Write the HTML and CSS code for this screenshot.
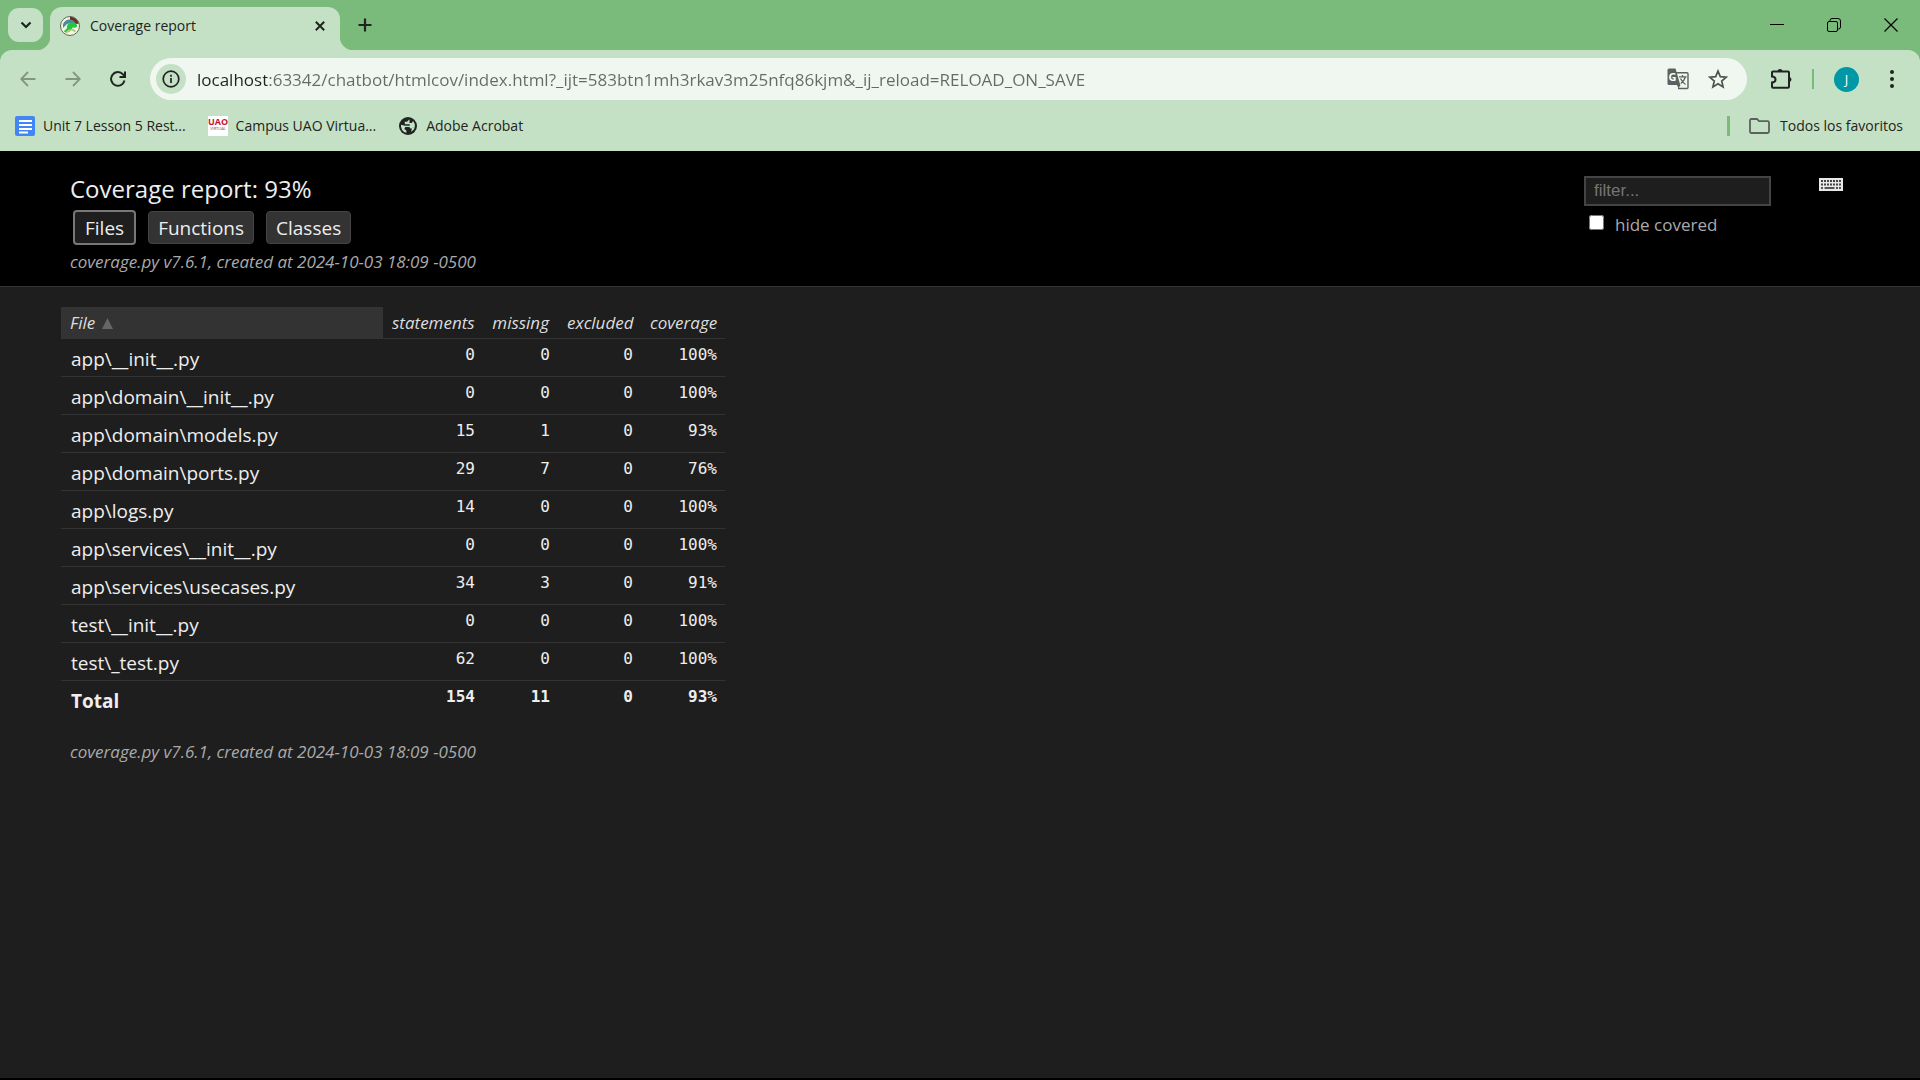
FILE: index.html
```html
<!DOCTYPE html>
<html lang="es">
<head>
<meta charset="utf-8">
<meta name="viewport" content="width=device-width, initial-scale=1">
<title>Coverage report</title>
<link rel="stylesheet" href="styles.css">
</head>
<body>
<div class="browser">
  <div class="tabstrip">
    <button class="tab-search" aria-label="Buscar pestañas"><svg width="12" height="8" viewBox="0 0 12 8"><path d="M1.5 1.5 6 6l4.500-4.500" fill="none" stroke="#1f2420" stroke-width="2.200"/></svg></button>
    <div class="tab">
      <svg class="favicon" width="20" height="20" viewBox="0 0 20 20"><circle cx="10" cy="10" r="9.500" fill="#f3f7df" stroke="#5d6b5c"/><path d="M10 .8a9.200 9.200 0 0 1 8.800 7L15 8l-5-4z" fill="#6d2b20"/><path d="M3 8c2-4 6-6 11-3l2 3-5-1-4 1-4 4z" fill="#4d8a99"/><path d="M7 11c0-5 8-6 10-2 .8 2-1 3-4 2.500-1 0-1 2-2 3s-5 3-7 1c1-2 3-2 3-4.500z" fill="#22c63f"/><path d="M6 17c3-4 8-4 9-1" stroke="#b5c98c" stroke-width="2" fill="none"/></svg>
      <span class="tab-title">Coverage report</span>
      <button class="icon-button tab-close" aria-label="Cerrar pestaña"><svg width="10" height="10" viewBox="0 0 10 10"><path d="m.8.8 8.400 8.400M9.200.8.8 9.200" stroke="#1f2420" stroke-width="2"/></svg></button>
    </div>
    <button class="icon-button new-tab" aria-label="Nueva pestaña"><svg width="14" height="14" viewBox="0 0 14 14"><path d="M7 .5v13M.5 7h13" stroke="#1f2420" stroke-width="2.200"/></svg></button>
    <div class="window-controls">
      <button class="icon-button" aria-label="Minimizar"><svg width="14" height="14" viewBox="0 0 14 14"><path d="M0 6.500h14" stroke="#000"/></svg></button>
      <button class="icon-button" aria-label="Restaurar"><svg width="14" height="14" viewBox="0 0 14 14"><rect x=".5" y="3.500" width="10" height="10" rx="1.500" fill="none" stroke="#000"/><path d="M3 3V2.500Q3 .5 5 .5h6q2.500 0 2.500 2.500v6q0 2-2 2H11" fill="none" stroke="#000"/></svg></button>
      <button class="icon-button" aria-label="Cerrar"><svg width="14" height="14" viewBox="0 0 14 14"><path d="m.5.5 13 13m0-13-13 13" stroke="#000" stroke-width="1.200"/></svg></button>
    </div>
  </div>
  <div class="chrome">
    <div class="toolbar">
      <button class="icon-button nav" aria-label="Atrás"><svg width="16" height="16" viewBox="0 0 16 16"><path d="M15.500 8H1.500M8 1 1.200 8 8 15" fill="none" stroke="#83977f" stroke-width="1.800"/></svg></button>
      <button class="icon-button nav" aria-label="Adelante"><svg width="16" height="16" viewBox="0 0 16 16"><path d="M.5 8h14M8 1l6.800 7L8 15" fill="none" stroke="#83977f" stroke-width="1.800"/></svg></button>
      <button class="icon-button nav" aria-label="Recargar"><svg width="16" height="16" viewBox="0 0 16 16"><path d="M14.500 9.500A6.800 6.800 0 1 1 13 3.400l1.500 1.800" fill="none" stroke="#1f2420" stroke-width="2"/><path d="M15 .5V6H9.500" fill="none" stroke="#1f2420" stroke-width="2"/></svg></button>
      <div class="omnibox">
        <button class="icon-button site-info" aria-label="Información del sitio"><svg width="18" height="18" viewBox="0 0 18 18"><circle cx="9" cy="9" r="7.800" fill="none" stroke="#1f2420" stroke-width="1.700"/><path d="M9 8v5M9 4.800v1.900" stroke="#1f2420" stroke-width="1.700"/></svg></button>
        <input class="url" type="text" aria-label="Dirección" value="localhost:63342/chatbot/htmlcov/index.html?_ijt=583btn1mh3rkav3m25nfq86kjm&amp;_ij_reload=RELOAD_ON_SAVE">
        <button class="icon-button" aria-label="Traducir"><svg width="22" height="22" viewBox="0 0 22 22"><path d="M9 4.800h11q1 0 1 1v13.700q0 1-1 1h-9" fill="none" stroke="#5c605e" stroke-width="1.400"/><path d="M2 .5h6.500l4.800 16.500H2q-1.500 0-1.500-1.500V2Q.5.500 2 .5z" fill="#5c605e"/><path d="m10 17 1.500 3.500 2-3.500z" fill="#5c605e"/><path d="M12 8.800h7.500M15.500 7v2M18.300 9q-1 4-4.500 6.500M13.500 10.500q2 4 5 6" fill="none" stroke="#5c605e" stroke-width="1.300"/><text x="1.500" y="12.500" class="glyph-g">G</text></svg></button>
        <button class="icon-button" aria-label="Añadir a favoritos"><svg width="20" height="20" viewBox="0 0 20 20"><path d="m10 2 2.300 5.600 6 .5-4.600 3.900 1.400 5.900-5.100-3.200-5.100 3.200L6.300 12 1.700 8.100l6-.5z" fill="none" stroke="#4e5350" stroke-width="1.700"/></svg></button>
      </div>
      <div class="actions">
        <button class="icon-button" aria-label="Extensiones"><svg width="22" height="22" viewBox="0 0 22 22"><path d="M2 4.500q0-1 1-1h15q1 0 1 1v14.200q0 1-1 1H3q-1 0-1-1v-4.200q3.500-.2 3.500-3T2 8.500z" fill="none" stroke="#1f2420" stroke-width="2"/><path d="M7.500 3.500q0-2.500 2.500-2.500t2.500 2.500zM19 9q2.500.3 2.500 2.500T19 14z" fill="#1f2420"/></svg></button>
        <span class="divider"></span>
        <button class="avatar" aria-label="Perfil">J</button>
        <button class="icon-button menu" aria-label="Menú"><svg width="4" height="18" viewBox="0 0 4 18"><g fill="#1f2420"><circle cx="2" cy="2" r="2"/><circle cx="2" cy="9" r="2"/><circle cx="2" cy="16" r="2"/></g></svg></button>
      </div>
    </div>
    <nav class="bookmarks">
      <a href="#"><svg width="20" height="20" viewBox="0 0 20 20"><rect width="20" height="20" rx="2" fill="#4285f4"/><path d="M4 5h13M4 9h13M4 13h13M4 16.500h9" stroke="#fff" stroke-width="1.900"/></svg><span>Unit 7 Lesson 5 Rest...</span></a>
      <a href="#"><svg width="20" height="20" viewBox="0 0 20 20"><rect width="20" height="20" fill="#fff"/><text x="10" y="9" class="logo-main">UAO</text><text x="10" y="14" class="logo-sub">VIRTUAL</text></svg><span>Campus UAO Virtua...</span></a>
      <a href="#"><svg width="20" height="20" viewBox="0 0 20 20"><circle cx="10" cy="10" r="9" fill="#1f2420"/><path d="M11.500 3.200 9 5.800H6.800v2.400h5v1.500l1.700 1.500h3.300a7 7 0 0 0-1.800-6.100l-1.200 2h-2.300zM3 8.800a7 7 0 0 0 5.500 8l-.2-2.300-2-1.500 1-2h4l1.200 1.500h1.500L13 15.800q3-1.300 3.800-4.200l-3.300-.4-1.700-1.500H7z" fill="#c5e1c5"/></svg><span>Adobe Acrobat</span></a>
      <span class="divider push"></span>
      <a href="#" class="all-bookmarks"><svg width="21" height="16" viewBox="0 0 21 16"><path d="M1 2.500Q1 1 2.500 1H8l2 2.200h8.500q1.500 0 1.500 1.500v8.800q0 1.500-1.500 1.500h-16Q1 15 1 13.500z" fill="none" stroke="#5c605e" stroke-width="1.800"/></svg><span>Todos los favoritos</span></a>
    </nav>
  </div>
</div>

<div class="report">
  <header>
    <div class="heading">
      <h1>Coverage report: 93%</h1>
      <div class="views">
        <button class="view current">Files</button>
        <button class="view">Functions</button>
        <button class="view">Classes</button>
      </div>
      <p class="meta">coverage.py v7.6.1, created at 2024-10-03 18:09 -0500</p>
    </div>
    <form class="filter">
      <input class="filter-text" type="text" placeholder="filter..." aria-label="filter">
      <div class="hide"><input type="checkbox" id="hide100"><label for="hide100">hide covered</label></div>
    </form>
    <button class="keyboard" aria-label="Keyboard shortcuts"><svg width="24" height="14" viewBox="0 0 24 14"><rect y="0" width="24" height="13" fill="#e8e8e8"/><path d="M2 3h20M2 6.500h20" stroke="#444" stroke-width="2" stroke-dasharray="2 1"/><path d="M2 10h2M5.500 10h10M17 10h2M20 10h2" stroke="#555" stroke-width="2"/></svg></button>
  </header>
  <main>
    <table>
      <colgroup><col class="c-file"><col class="c-statements"><col class="c-missing"><col class="c-excluded"><col class="c-coverage"></colgroup>
      <thead><tr><th class="sorted">File<svg class="arrow" width="11" height="11" viewBox="0 0 11 11"><path d="M5.500 0 11 11H0z" fill="#666"/></svg></th><th>statements</th><th>missing</th><th>excluded</th><th>coverage</th></tr></thead>
      <tbody>
        <tr><td><a href="#">app\__init__.py</a></td><td>0</td><td>0</td><td>0</td><td>100%</td></tr>
        <tr><td><a href="#">app\domain\__init__.py</a></td><td>0</td><td>0</td><td>0</td><td>100%</td></tr>
        <tr><td><a href="#">app\domain\models.py</a></td><td>15</td><td>1</td><td>0</td><td>93%</td></tr>
        <tr><td><a href="#">app\domain\ports.py</a></td><td>29</td><td>7</td><td>0</td><td>76%</td></tr>
        <tr><td><a href="#">app\logs.py</a></td><td>14</td><td>0</td><td>0</td><td>100%</td></tr>
        <tr><td><a href="#">app\services\__init__.py</a></td><td>0</td><td>0</td><td>0</td><td>100%</td></tr>
        <tr><td><a href="#">app\services\usecases.py</a></td><td>34</td><td>3</td><td>0</td><td>91%</td></tr>
        <tr><td><a href="#">test\__init__.py</a></td><td>0</td><td>0</td><td>0</td><td>100%</td></tr>
        <tr><td><a href="#">test\_test.py</a></td><td>62</td><td>0</td><td>0</td><td>100%</td></tr>
      </tbody>
      <tfoot><tr><td>Total</td><td>154</td><td>11</td><td>0</td><td>93%</td></tr></tfoot>
    </table>
    <p class="meta">coverage.py v7.6.1, created at 2024-10-03 18:09 -0500</p>
  </main>
</div>
</body>
</html>
```
FILE: styles.css
```css
* { box-sizing: border-box; }

body {
  margin: 0;
  min-height: 100vh;
  display: flex;
  flex-direction: column;
  background: #1e1e1e;
  border-bottom: 2px solid #000;
  color: #eee;
  font-family: "Open Sans", "Noto Sans", sans-serif;
}

button, input { font-family: inherit; }
button { cursor: pointer; }
svg { display: block; flex: none; }
a { color: inherit; text-decoration: none; }

.icon-button {
  display: flex;
  align-items: center;
  justify-content: center;
  flex: none;
  padding: 0;
  border: 0;
  background: none;
}

/* Browser window */
.browser { background: #7abb7c; color: #1f2420; font-size: 14px; }

.tabstrip {
  display: flex;
  align-items: center;
  height: 50px;
  padding-left: 8px;
}

.tab-search {
  display: flex;
  align-items: center;
  justify-content: center;
  width: 35px;
  height: 34px;
  margin-right: 7px;
  padding: 0;
  border: 0;
  border-radius: 11px;
  background: #c5e1c5;
}

.tab {
  position: relative;
  display: flex;
  align-items: center;
  align-self: flex-end;
  width: 290px;
  height: 43px;
  padding: 0 15px 6px 10px;
  border-radius: 12px 12px 0 0;
  background: #c5e1c5;
}

.tab::before, .tab::after {
  content: "";
  position: absolute;
  bottom: 0;
  width: 14px;
  height: 14px;
}
.tab::before { right: 100%; background: radial-gradient(circle at 0 0, transparent 14px, #c5e1c5 15px); }
.tab::after { left: 100%; background: radial-gradient(circle at 100% 0, transparent 14px, #c5e1c5 15px); }

.tab-title { flex: 1; padding-left: 10px; }
.new-tab { margin-left: 18px; }
.window-controls { display: flex; gap: 43px; margin-left: auto; padding-right: 22px; }

.chrome { border-radius: 12px 12px 0 0; background: #c5e1c5; }

.toolbar { display: flex; align-items: center; height: 58px; padding: 0 26px 0 5px; }
.nav { width: 45px; height: 45px; }

.omnibox {
  display: flex;
  align-items: center;
  flex: 1;
  gap: 19px;
  height: 42px;
  margin-left: 10px;
  padding: 0 19px 0 6px;
  border-radius: 21px;
  background: #f0f7f0;
}

.site-info { width: 30px; height: 30px; border-radius: 50%; background: #c5e1c5; }

.url {
  flex: 1;
  min-width: 0;
  margin-left: -8px;
  padding: 0;
  border: 0;
  outline: 0;
  background: linear-gradient(to right, #1f2420 70px, #646b66 70px);
  -webkit-background-clip: text;
  background-clip: text;
  color: transparent;
  font-size: 17px;
}

.glyph-g { fill: #fff; font: bold 11px "Open Sans", sans-serif; }
.actions { display: flex; align-items: center; margin-left: 23px; }
.divider { width: 2px; height: 20px; background: #7abb7c; }
.actions .divider { margin: 0 20px; }

.avatar {
  width: 25px;
  height: 25px;
  margin-right: 31px;
  padding: 0;
  border: 0;
  border-radius: 50%;
  background: #0097a7;
  color: #fff;
  font-size: 13px;
  line-height: 25px;
}

.bookmarks { display: flex; align-items: center; gap: 22px; height: 43px; padding: 0 17px 8px 15px; }
.bookmarks a { display: flex; align-items: center; gap: 8px; }
.bookmarks .push { width: 3px; margin-left: auto; }
.bookmarks .all-bookmarks { gap: 10px; margin-left: -3px; }
.logo-main { fill: #c8102e; font: bold 9px "Open Sans", sans-serif; text-anchor: middle; }
.logo-sub { fill: #555; font: 4px "Open Sans", sans-serif; text-anchor: middle; }

/* Coverage report */
.report { flex: 1; }

header {
  display: flex;
  align-items: flex-start;
  height: 136px;
  padding: 22px 77px 0 70px;
  border-bottom: 1px solid #333;
  background: #000;
}

.heading { flex: 1; }
h1 { margin: 0; font-size: 24px; font-weight: 400; line-height: 32px; }
.views { display: flex; align-items: center; gap: 12px; height: 42px; padding: 2px 0 0 3px; }

.view {
  height: 33px;
  padding: 1px 9px 0;
  border: 1px solid #444;
  border-radius: 4px;
  background: #333;
  color: #eee;
  font-size: 19px;
  line-height: 30px;
}
.view.current { height: 35px; padding: 1px 10px 0; border: 2px solid #777; background: #1e1e1e; }

.meta { margin: 0; color: #aaa; font-size: 17px; font-style: italic; line-height: 30px; }

.filter-text {
  display: block;
  width: 187px;
  height: 30px;
  margin-top: 3px;
  padding: 0 8px;
  border: 2px solid #444;
  background: #1e1e1e;
  color: #eee;
  font: 17px "Liberation Sans", sans-serif;
}
.filter-text::placeholder { color: #757575; }

.hide { display: flex; align-items: flex-start; gap: 11px; padding: 6px 0 0 5px; color: #aaa; font-size: 17px; line-height: 26px; }
.hide input { width: 15px; height: 15px; margin: 3px 0 0; }
.keyboard { margin: 5px 0 0 48px; padding: 0; border: 0; background: none; }

main { padding: 20px 61px; }

table { width: 664px; border-collapse: collapse; table-layout: fixed; }
.c-file { width: 322px; }
.c-statements { width: 100px; }
.c-missing { width: 75px; }
.c-excluded { width: 83px; }
.c-coverage { width: 84px; }

tr { border-bottom: 1px solid #333; }
tfoot tr { border-bottom: 0; }
th {
  height: 31px;
  padding: 1px 9px 0;
  color: #ddd;
  font-size: 17px;
  font-style: italic;
  font-weight: 400;
  text-align: right;
  white-space: nowrap;
}
th.sorted { background: #333; text-align: left; }
.arrow { display: inline-block; margin-left: 7px; }

td {
  height: 38px;
  padding: 4px 8px 0;
  font: 16px/24px "DejaVu Sans Mono", monospace;
  text-align: right;
  vertical-align: top;
}
td:first-child { padding: 5px 10px 0; font: 19px/30px "Open Sans", "Noto Sans", sans-serif; text-align: left; }
tfoot td, tfoot td:first-child { font-weight: 700; }
main .meta { padding: 19px 9px 0; }
```
